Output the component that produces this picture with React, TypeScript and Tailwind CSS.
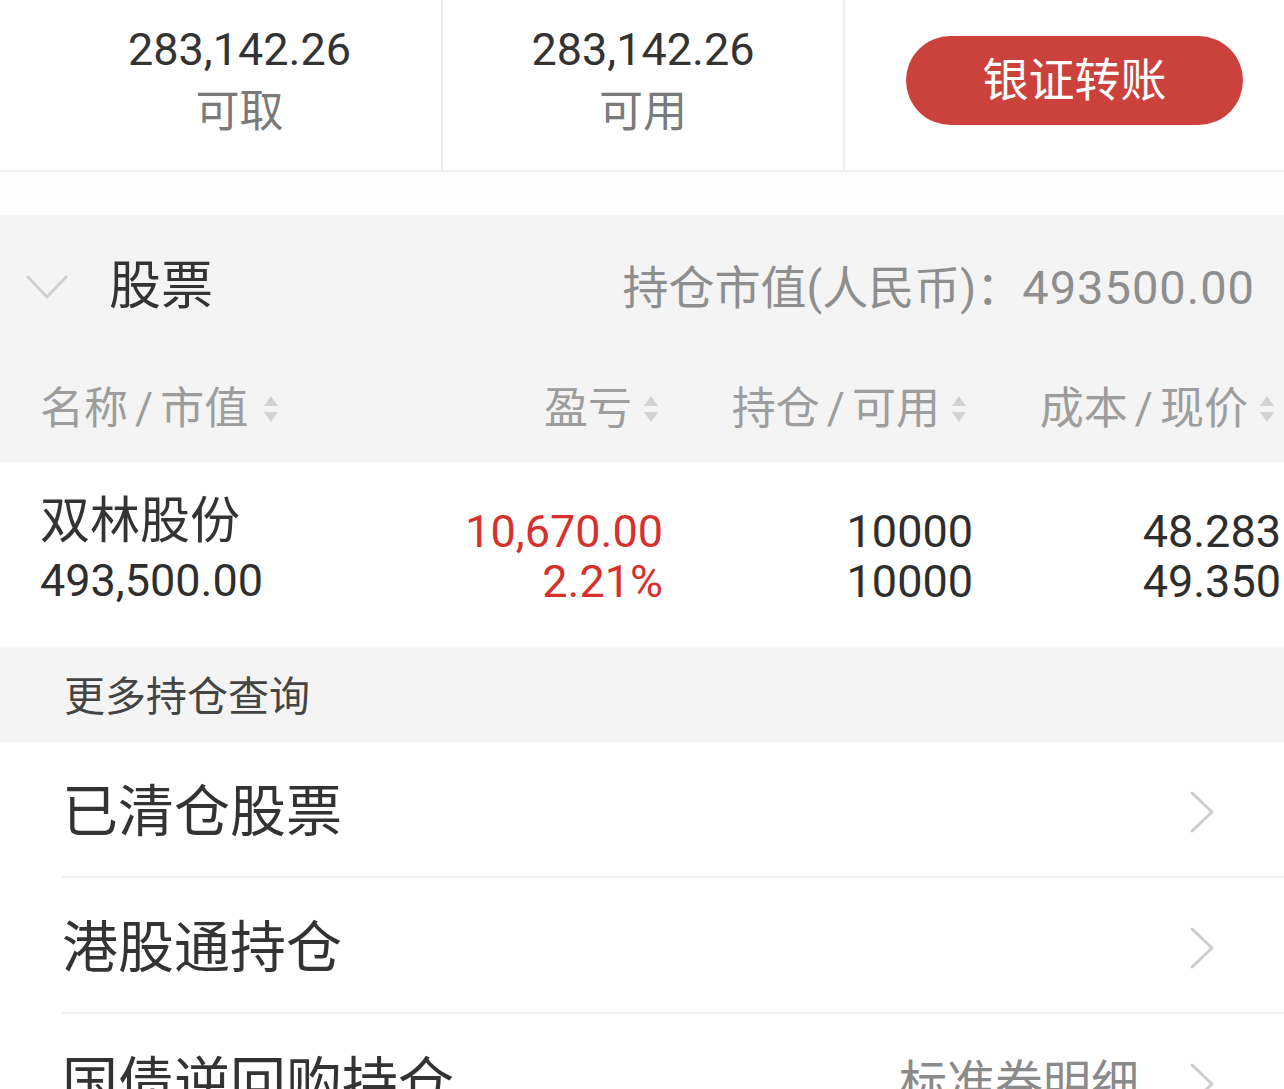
const FONT = "font-['Roboto','Noto_Sans_CJK_SC',sans-serif]";

function SortIcon() {
  return (
    <svg width="18" height="30" viewBox="0 0 18 30" className="shrink-0">
      <path d="M9 2 L16 12 H2 Z" fill="#d2d2d2" />
      <path d="M9 28 L16 18 H2 Z" fill="#d2d2d2" />
    </svg>
  );
}

function ChevronRight() {
  return (
    <svg width="26" height="44" viewBox="0 0 26 44" className="shrink-0">
      <path d="M3 3 L23 22 L3 41" fill="none" stroke="#cdcdcd" strokeWidth="3" strokeLinecap="round" strokeLinejoin="round" />
    </svg>
  );
}

const BALANCES = [
  { value: '283,142.26', label: '可取', width: 'w-[443px] pl-[38px]' },
  { value: '283,142.26', label: '可用', width: 'w-[402px]' },
];

const MORE_LINKS = [
  { label: '已清仓股票' },
  { label: '港股通持仓' },
  { label: '国债逆回购持仓', extra: '标准券明细' },
];

export default function App() {
  return (
    <div className={`w-[1284px] h-[1089px] overflow-hidden bg-white ${FONT}`}>
      {/* Balances + transfer button */}
      <div className="flex h-[172px] border-b-2 border-[#ededed]">
        {BALANCES.map((b, i) => (
          <div
            key={i}
            className={`${b.width} border-r-2 border-[#efefef] flex flex-col items-center justify-center gap-[6px] pb-[8px]`}
          >
            <div className="text-[45px] leading-[56px] text-[#333333]">{b.value}</div>
            <div className="text-[44px] leading-[56px] text-[#7a7a7a]">{b.label}</div>
          </div>
        ))}
        <div className="flex-1 flex items-center pl-[61px] pb-[10px]">
          <button className="w-[337px] h-[89px] rounded-full bg-[#cb423d] text-white text-[46px] leading-none">
            银证转账
          </button>
        </div>
      </div>

      <div className="h-[43px] bg-[#fdfdfd]" />

      {/* Stocks header */}
      <div className="bg-[#f4f4f4]">
        <div className="h-[140px] flex items-center pl-[25px] pr-[29px] pt-[4px]">
          <svg width="44" height="28" viewBox="0 0 44 28" className="shrink-0">
            <path d="M3 4 L22 24 L41 4" fill="none" stroke="#d0d0d0" strokeWidth="3" strokeLinecap="round" strokeLinejoin="round" />
          </svg>
          <span className="ml-[40px] text-[52px] leading-none text-[#333333]">股票</span>
          <span className="ml-auto text-[46px] leading-none text-[#8e8e8e]">
            持仓市值(人民币)：<span className="text-[47px] tracking-[1px]">493500.00</span>
          </span>
        </div>
        <div className="h-[107px] flex items-center pl-[40px] pr-[3px] text-[44px] leading-none text-[#9d9d9d]">
          <div className="w-[323px] flex items-center">
            <span>名称<span className="mx-[7px]">/</span>市值</span>
            <span className="ml-[14px]"><SortIcon /></span>
          </div>
          <div className="w-[300px] flex items-center justify-end gap-[10px] pr-[3px]">
            <span>盈亏</span>
            <SortIcon />
          </div>
          <div className="w-[310px] flex items-center justify-end gap-[10px] pr-[5px]">
            <span>持仓<span className="mx-[7px]">/</span>可用</span>
            <SortIcon />
          </div>
          <div className="w-[308px] flex items-center justify-end gap-[10px] pr-[5px]">
            <span>成本<span className="mx-[7px]">/</span>现价</span>
            <SortIcon />
          </div>
        </div>
      </div>

      {/* Holding row */}
      <div className="h-[185px] flex pl-[40px] pr-[3px] bg-white">
        <div className="w-[323px] pt-[29px]">
          <div className="text-[50px] leading-[60px] text-[#333333]">双林股份</div>
          <div className="mt-[5px] text-[45px] leading-[50px] text-[#2e2e2e]">493,500.00</div>
        </div>
        <div className="w-[300px] flex flex-col justify-center items-end pt-[4px] text-[45px] leading-[50px] text-[#d8312d]">
          <div>10,670.00</div>
          <div>2.21%</div>
        </div>
        <div className="w-[310px] flex flex-col justify-center items-end pt-[4px] text-[45px] leading-[50px] text-[#2e2e2e]">
          <div>10000</div>
          <div>10000</div>
        </div>
        <div className="w-[308px] flex flex-col justify-center items-end pt-[4px] text-[45px] leading-[50px] text-[#2e2e2e]">
          <div>48.283</div>
          <div>49.350</div>
        </div>
      </div>

      {/* More holdings */}
      <div className="h-[95px] bg-[#f4f4f4] flex items-center pl-[64px] pt-[6px] text-[41px] leading-none text-[#444444]">
        更多持仓查询
      </div>

      <div className="bg-white">
        {MORE_LINKS.map((item) => (
          <div key={item.label} className="pl-[62px]">
            <div className="h-[136px] flex items-center pr-[69px] pt-[6px] border-b-2 border-[#f1f1f1]">
              <span className="text-[56px] leading-none text-[#333333]">{item.label}</span>
              <div className="ml-auto flex items-center gap-[50px]">
                {item.extra && (
                  <span className="text-[48px] leading-none text-[#8a8a8a]">{item.extra}</span>
                )}
                <ChevronRight />
              </div>
            </div>
          </div>
        ))}
      </div>
    </div>
  );
}
